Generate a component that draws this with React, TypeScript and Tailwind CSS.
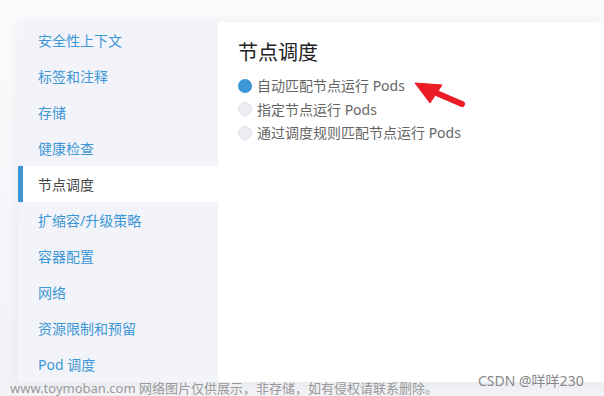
const menu = [
    "安全性上下文",
    "标签和注释",
    "存储",
    "健康检查",
    "节点调度",
    "扩缩容/升级策略",
    "容器配置",
    "网络",
    "资源限制和预留",
    "Pod 调度",
];

const options = [
    "自动匹配节点运行 Pods",
    "指定节点运行 Pods",
    "通过调度规则匹配节点运行 Pods",
];

export default function App() {
    const current = "节点调度";
    return (
        <div
            className="relative w-[604px] h-[396px] overflow-hidden bg-gradient-to-b from-[#fbfbfd] to-[#f1f2f6] pt-[22px] pl-[18px]"
            style={{ fontFamily: '"Noto Sans", "Noto Sans CJK SC", sans-serif' }}
        >
            <div className="flex h-[360px] shadow-[0_0_12px_rgba(40,50,80,0.06)]">
                <div className="w-[200px] bg-[#f3f4f9]">
                    {menu.map((name, key) => {
                        const isActive = name === current;
                        return (
                            <div
                                key={key}
                                className={`flex items-center h-9 text-[14px] ${isActive ? "bg-white border-l-[5px] border-[#3d97d6] pl-[15px] text-[#444]" : "pl-5 text-[#3d97d6]"}`}
                            >
                                {name}
                            </div>
                        );
                    })}
                </div>
                <div className="relative flex-1 bg-white pl-5 pt-[17px]">
                    <div className="text-[20px] leading-7 text-[#222]">节点调度</div>
                    <div className="mt-[7px]">
                        {options.map((opt, key) => (
                            <div key={key} className="flex items-center h-[23.5px] gap-[5px]">
                                <span
                                    className={`w-[14px] h-[14px] rounded-full ${key === 0 ? "bg-[#3d97d6]" : "bg-[#eceef3] border border-[#e0e3ea]"}`}
                                />
                                <span className="text-[14px] text-[#666]">{opt}</span>
                            </div>
                        ))}
                    </div>
                    {/* 紅色箭頭 */}
                    <svg
                        className="absolute left-[196px] top-[60px]"
                        width="54"
                        height="28"
                        viewBox="0 0 54 28"
                    >
                        <line x1="48" y1="22" x2="20" y2="10" stroke="#ec1c24" strokeWidth="6" strokeLinecap="round" />
                        <polygon points="1,1 28,3 16,21" fill="#ec1c24" strokeLinejoin="round" stroke="#ec1c24" strokeWidth="1" />
                    </svg>
                </div>
            </div>
            <div className="absolute left-[10px] top-[380px] text-[13px] leading-4 text-[#999] whitespace-nowrap">
                www.toymoban.com 网络图片仅供展示，非存储，如有侵权请联系删除。
            </div>
            <div className="absolute left-[478px] top-[370px] text-[14px] text-[#888] whitespace-nowrap">
                CSDN @咩咩230
            </div>
        </div>
    );
}
